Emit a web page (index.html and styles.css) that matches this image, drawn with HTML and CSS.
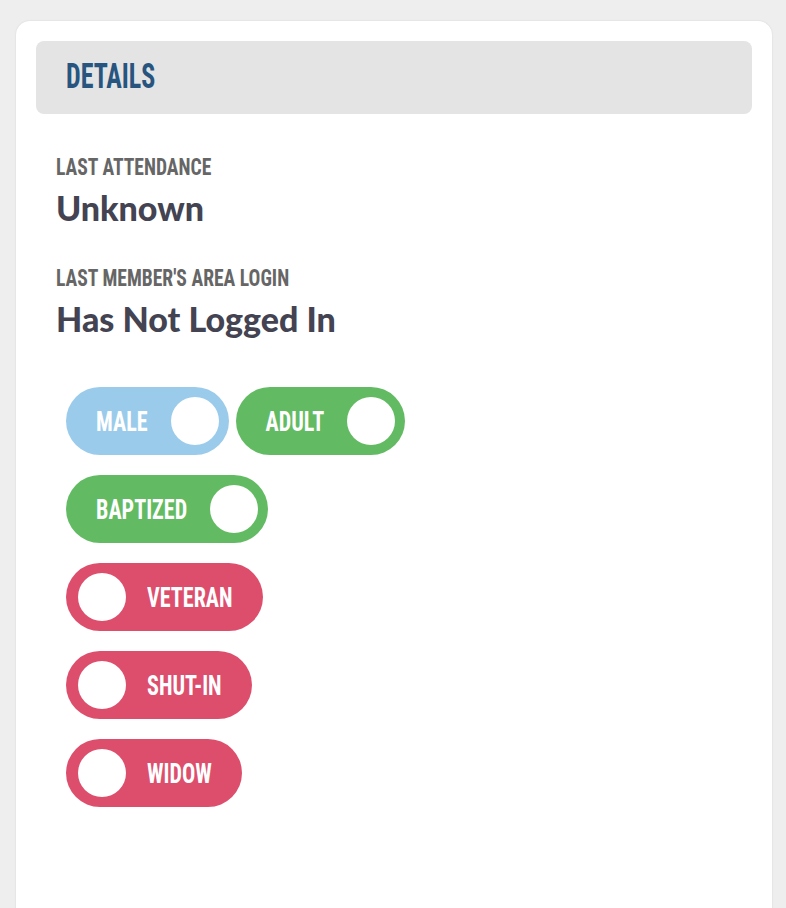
FILE: index.html
```html
<!DOCTYPE html>
<html lang="en">
<head>
  <meta charset="UTF-8" />
  <meta name="viewport" content="width=device-width, initial-scale=1" />
  <title>Member Details</title>
  <link rel="stylesheet" href="styles.css">
</head>
<body>

<section class="card">
  <header class="card-head">
    <h2><span>DETAILS</span></h2>
  </header>

  <div class="card-body">
    <div class="field">
      <div class="field-label"><span>LAST ATTENDANCE</span></div>
      <div class="field-value">Unknown</div>
    </div>
    <div class="field">
      <div class="field-label"><span>LAST MEMBER'S AREA LOGIN</span></div>
      <div class="field-value">Has Not Logged In</div>
    </div>

    <!-- Toggles -->
    <div class="toggles">
      <div class="toggle-row">
        <button class="toggle on male"><span class="txt">MALE</span><span class="knob"></span></button>
        <button class="toggle on"><span class="txt">ADULT</span><span class="knob"></span></button>
      </div>
      <div class="toggle-row">
        <button class="toggle on"><span class="txt">BAPTIZED</span><span class="knob"></span></button>
      </div>
      <div class="toggle-row">
        <button class="toggle off"><span class="knob"></span><span class="txt">VETERAN</span></button>
      </div>
      <div class="toggle-row">
        <button class="toggle off"><span class="knob"></span><span class="txt">SHUT-IN</span></button>
      </div>
      <div class="toggle-row">
        <button class="toggle off"><span class="knob"></span><span class="txt">WIDOW</span></button>
      </div>
    </div>
  </div>
</section>

</body>
</html>
```
FILE: styles.css
```css
body {
  margin: 0; background: #eeeeee; font-family: Lato, sans-serif;
}
.card {
  margin: 21px 14px 0 16px; min-height: 920px; box-sizing: border-box;
  background: #fff; border-radius: 14px 14px 0 0; padding: 20px;
  box-shadow: 0 0 2px rgba(0,0,0,0.12);
}
.card-head {
  height: 73px; background: #e4e4e4; border-radius: 8px;
  display: flex; align-items: center; padding: 0 30px 4px; box-sizing: border-box;
}
.card-head h2 {
  margin: 0; font-family: Roboto, sans-serif; font-stretch: 75%; font-weight: 700;
  font-size: 26px; line-height: 30px; color: #27557f;
}
.card-head h2 span, .field-label span, .toggle .txt {
  display: inline-block;
}
.card-head h2 span { transform: scaleY(1.33); }
.card-body {
  padding: 44px 20px 0;
}
.field + .field { margin-top: 41px; }
.field-label {
  font-family: Roboto, sans-serif; font-stretch: 75%; font-weight: 700;
  font-size: 19.6px; line-height: 20px; color: #666;
  margin-bottom: 10px;
}
.field-label span { transform: scaleY(1.2); }
.field-value {
  font-weight: 900; font-size: 34px; line-height: 40px; color: #434352;
}
/* Toggles */
.toggles {
  margin-top: 48px; padding-left: 10px;
}
.toggle-row {
  display: flex; gap: 7px; margin-bottom: 20px;
}
.toggle {
  display: inline-flex; align-items: center; height: 68px; border: none;
  border-radius: 34px; margin: 0; color: #fff; cursor: pointer;
  font-family: Roboto, sans-serif; font-stretch: 75%; font-weight: 700;
  font-size: 22.1px; line-height: 30px;
}
.toggle .txt { transform: scaleY(1.28); }
.toggle .knob {
  width: 48px; height: 48px; border-radius: 50%; background: #fff; flex: none;
}
.toggle.on { background: #62bb63; padding: 0 10px 0 30px; }
.toggle.on .knob { margin-left: 23px; }
.toggle.male { background: #9acbeb; }
.toggle.off { background: #dd4d6c; padding: 0 30px 0 12px; }
.toggle.off .knob { margin-right: 21px; }
```
